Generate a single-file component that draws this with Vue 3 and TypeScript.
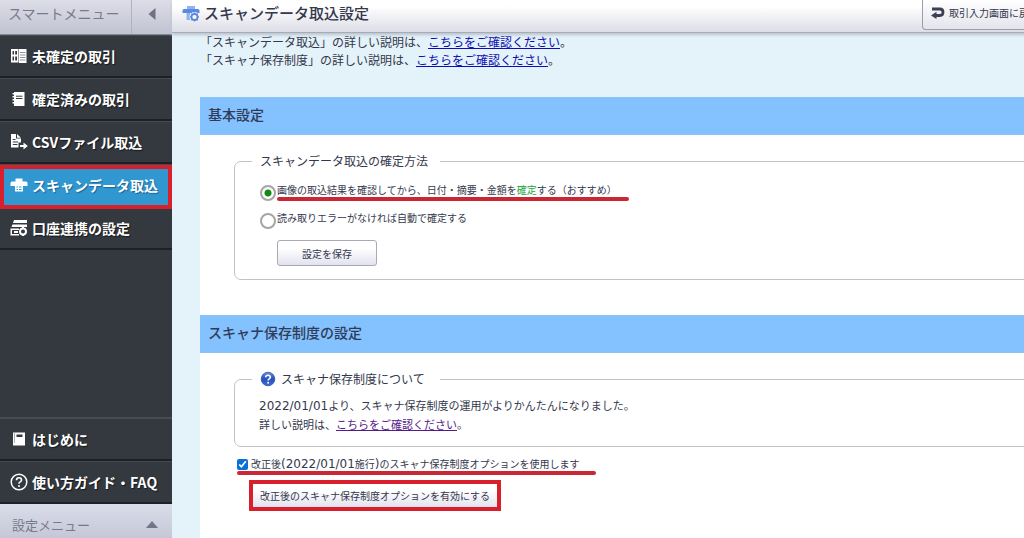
<script setup lang="ts">
import { ref } from 'vue'

type IconName = 'table' | 'book' | 'csv' | 'scanner' | 'account' | 'guide' | 'help'

interface MenuItem {
  label: string
  icon: IconName
  active?: boolean
}

const mainMenu: MenuItem[] = [
  { label: '未確定の取引', icon: 'table' },
  { label: '確定済みの取引', icon: 'book' },
  { label: 'CSVファイル取込', icon: 'csv' },
  { label: 'スキャンデータ取込', icon: 'scanner', active: true },
  { label: '口座連携の設定', icon: 'account' },
]

const helpMenu: MenuItem[] = [
  { label: 'はじめに', icon: 'guide' },
  { label: '使い方ガイド・FAQ', icon: 'help' },
]

const menuGroups = [mainMenu, helpMenu]
const confirmMethod = ref('manual')
const useRevisedOption = ref(true)
</script>

<template>
  <div class="app">
    <aside class="sidebar">
      <div class="menu-head">
        <span class="menu-title">スマートメニュー</span>
        <button class="collapse" type="button" aria-label="メニューを閉じる">
          <svg width="8" height="12" viewBox="0 0 8 12"><path d="M7.500 0V12L0.500 6Z" fill="#6f7080" /></svg>
        </button>
      </div>
      <nav class="menu">
        <ul v-for="(group, index) in menuGroups" :key="index" class="menu-group">
          <li v-for="item in group" :key="item.label">
            <a href="#" class="menu-item" :class="{ active: item.active }">
              <svg class="menu-icon" width="18" height="18" viewBox="0 0 18 18" fill="#fff">
                <template v-if="item.icon === 'table'">
                  <path fill-rule="evenodd" d="M1 2H8.500V15.500H1ZM2.500 4V7.500H4V4ZM5.200 4V7.500H7V4ZM2.500 9.500V13.500H4V9.500ZM5.200 9.500V13.500H7V9.500Z" />
                  <path d="M9 2H16.500V16H9Z" />
                  <path d="M10 5.500H15.500M10 8H15.500M10 10.500H15.500M10 13H15.500" stroke="#8d9296" fill="none" />
                </template>
                <template v-else-if="item.icon === 'book'">
                  <path d="M4 2H14.500V16H4Z" />
                  <path d="M2.500 3H5V4.500H2.500ZM2.500 6H5V7.500H2.500ZM2.500 9H5V10.500H2.500ZM2.500 12H5V13.500H2.500Z" />
                  <path d="M6 6.200H12.500M6 8.500H12.500" stroke="#343a41" fill="none" />
                </template>
                <template v-else-if="item.icon === 'csv'">
                  <path d="M1 1H6V5.500H11V9.500H8.500V14.500H1Z" />
                  <path d="M7 1L11 4.700H7Z" />
                  <path d="M2.800 6.500H5.500M2.800 9H8M2.800 11.500H7.500" stroke="#343a41" fill="none" />
                  <path d="M10 12H13.500V9.500L17.800 13L13.500 16.500V14H10Z" />
                </template>
                <template v-else-if="item.icon === 'scanner'">
                  <path d="M5.500 2.500H12.500V5.500H16Q17.500 5.500 17.500 7V10H13V9H5V10H0.500V7Q0.500 5.500 2 5.500H5.500Z" />
                  <path fill-rule="evenodd" d="M5 9H13V15.500H5ZM6.500 10.500V11.500H8V10.500ZM9 10.500V11.500H11.500V10.500ZM6.500 13V14H8V13ZM9 13V14H11.500V13Z" />
                </template>
                <template v-else-if="item.icon === 'account'">
                  <path d="M4 1H17V4H3ZM2.500 5.500H17V8H1.500ZM1 9.500H9V11H2V15H9V16.500H0.500V9.500Z" />
                  <path d="M4 12H8V14H4Z" />
                  <circle cx="13" cy="12.500" r="3" fill="none" stroke="#fff" stroke-width="2" />
                  <path d="M12 8H14V10H12ZM12 15H14V17H12Z" />
                </template>
                <template v-else-if="item.icon === 'guide'">
                  <path fill-rule="evenodd" d="M3 2.500H15V15.500H3ZM6.500 4.500V7H12.500V4.500Z" />
                  <path d="M4.500 3V13" stroke="#aeb2b6" fill="none" />
                </template>
                <template v-else>
                  <circle cx="9" cy="9" r="7.800" fill="none" stroke="#fff" stroke-width="1.500" />
                  <path d="M6.500 7.200Q6.500 4.800 9 4.800T11.500 7Q11.500 8.200 10.200 8.900Q9 9.500 9 10.700" fill="none" stroke="#fff" stroke-width="1.600" />
                  <circle cx="9" cy="12.900" r="1" />
                </template>
              </svg>
              <span>{{ item.label }}</span>
            </a>
          </li>
        </ul>
      </nav>
      <button class="settings-menu" type="button">
        <span>設定メニュー</span>
        <svg width="12" height="7" viewBox="0 0 12 7"><path d="M0 7L6 0L12 7Z" fill="#74758a" /></svg>
      </button>
    </aside>

    <main class="main">
      <header class="page-head">
        <svg class="page-icon" width="18" height="18" viewBox="0 0 18 18">
          <path d="M5 1H13V4H5Z" fill="#8eb4ee" />
          <path d="M2 4H16Q17.500 4 17.500 6V8H0.500V6Q0.500 4 2 4Z" fill="#5a8ae2" />
          <path d="M4.500 8H8V15H4.500Z" fill="#8eb4ee" />
          <circle cx="12.500" cy="12" r="5" fill="#f4f5f9" />
          <circle cx="12.500" cy="12" r="3" fill="#fff" stroke="#5a8ae2" stroke-width="1.800" />
          <path d="M12.500 7.500V9M12.500 15V16.500M8 12H9.500M15.500 12H17M9.300 8.800L10.300 9.800M14.700 14.200L15.700 15.200M15.700 8.800L14.700 9.800M10.300 14.200L9.300 15.200" stroke="#5a8ae2" stroke-width="1.500" />
        </svg>
        <h1>スキャンデータ取込設定</h1>
        <button class="back" type="button">
          <svg width="14" height="12" viewBox="0 0 14 12">
            <path d="M1 2H9Q12 2 12 5.200T9 8.500H5" fill="none" stroke="#3c3f55" stroke-width="2.800" />
            <path d="M0 8.500L5.500 4.800V12Z" fill="#3c3f55" />
          </svg>
          <span>取引入力画面に戻る</span>
        </button>
      </header>

      <div class="content">
        <div class="intro">
          <p>「スキャンデータ取込」の詳しい説明は、<a href="#">こちらをご確認ください</a>。</p>
          <p>「スキャナ保存制度」の詳しい説明は、<a href="#">こちらをご確認ください</a>。</p>
        </div>

        <section class="panel">
          <h2>基本設定</h2>
          <div class="panel-body">
            <fieldset class="method">
              <legend>スキャンデータ取込の確定方法</legend>
              <label class="choice">
                <input v-model="confirmMethod" type="radio" name="method" value="manual" />
                <span class="marked">画像の取込結果を確認してから、日付・摘要・金額を<em>確定</em>する（おすすめ）</span>
              </label>
              <label class="choice">
                <input v-model="confirmMethod" type="radio" name="method" value="auto" />
                <span>読み取りエラーがなければ自動で確定する</span>
              </label>
              <button class="button save" type="button">設定を保存</button>
            </fieldset>
          </div>
        </section>

        <section class="panel">
          <h2>スキャナ保存制度の設定</h2>
          <div class="panel-body">
            <fieldset class="about">
              <legend>
                <svg width="16" height="16" viewBox="0 0 16 16">
                  <defs>
                    <linearGradient id="help-fill" x1="0" y1="0" x2="0" y2="1">
                      <stop offset="0" stop-color="#6c92e0" />
                      <stop offset="0.500" stop-color="#2450bd" />
                      <stop offset="1" stop-color="#3d6ed6" />
                    </linearGradient>
                  </defs>
                  <circle cx="8" cy="8" r="6.800" fill="url(#help-fill)" stroke="#2c4fa8" stroke-width="0.800" />
                  <path d="M5.700 6.300Q5.800 4.200 8 4.200T10.300 6.200Q10.300 7.200 9.200 7.900Q8.100 8.500 8.100 9.600" fill="none" stroke="#fff" stroke-width="1.600" />
                  <circle cx="8.100" cy="11.700" r="1" fill="#fff" />
                </svg>
                <span>スキャナ保存制度について</span>
              </legend>
              <p><span class="date">2022/01/01</span>より、スキャナ保存制度の運用がよりかんたんになりました。</p>
              <p>詳しい説明は、<a class="visited" href="#">こちらをご確認ください</a>。</p>
            </fieldset>
            <label class="option">
              <input v-model="useRevisedOption" type="checkbox" />
              <span>改正後<span class="date">(2022/01/01</span>施行<span class="date">)</span>のスキャナ保存制度オプションを使用します</span>
            </label>
            <div class="highlight">
              <button class="button enable" type="button">改正後のスキャナ保存制度オプションを有効にする</button>
            </div>
          </div>
        </section>
      </div>
    </main>
  </div>
</template>

<style>
body {
  margin: 0;
  overflow: hidden;
}
</style>

<style scoped>
.app {
  display: flex;
  height: 100vh;
  overflow: hidden;
  color: #34384c;
  background: #fff;
  font-family: "Noto Sans CJK JP", sans-serif;
  font-size: 12px;
  line-height: 18px;
}

.app *,
.app *::after {
  box-sizing: border-box;
}

button {
  font-family: inherit;
  color: inherit;
  cursor: pointer;
}

p,
h1,
h2,
ul {
  margin: 0;
  padding: 0;
}

/* Sidebar */
.sidebar {
  display: flex;
  flex: none;
  flex-direction: column;
  width: 172px;
  background: #343940;
}

.menu-head {
  display: flex;
  flex: none;
  height: 35px;
  color: #797a89;
  background: linear-gradient(#dcdde7, #c2c3d2);
  border-bottom: 1px solid #85868f;
}

.menu-title {
  flex: 1;
  padding-left: 8px;
  font-size: 14px;
  line-height: 26px;
}

.collapse {
  display: flex;
  align-items: center;
  justify-content: center;
  width: 41px;
  padding: 0 0 6px;
  background: none;
  border: 0;
  border-left: 1px solid #b0b1be;
}

.menu {
  display: flex;
  flex: 1;
  flex-direction: column;
  justify-content: space-between;
  min-height: 0;
}

.menu-group {
  list-style: none;
}

.menu-group:last-child {
  border-top: 1px solid #484e56;
}

.menu-item {
  display: flex;
  gap: 4px;
  align-items: center;
  height: 43px;
  padding-left: 10px;
  color: #fff;
  font-size: 14px;
  font-weight: 700;
  text-decoration: none;
  text-shadow: 1px 1px 1px #14181c;
  white-space: nowrap;
  border-top: 1px solid #454b52;
  border-bottom: 2px solid #1d2126;
}

.menu-item.active {
  position: relative;
  background: #3197d0;
  text-shadow: 1px 1px 1px #1c6490;
}

.menu-item.active::after {
  position: absolute;
  inset: 0 0 -4px;
  content: "";
  border: 4px solid #d8202c;
}

.menu-icon {
  flex: none;
}

.settings-menu {
  display: flex;
  flex: none;
  align-items: center;
  justify-content: space-between;
  height: 34px;
  padding: 6px 14px 0 12px;
  color: #797a89;
  font-size: 13px;
  background: linear-gradient(#d9dde9, #c5c7d8);
  border: 0;
}

/* Page */
.main {
  flex: 1;
  min-width: 880px;
  background: #e4f2f9;
}

.page-head {
  position: relative;
  display: flex;
  align-items: flex-start;
  height: 33px;
  padding-left: 10px;
  background: linear-gradient(#fff 20%, #dcdde6);
  border-bottom: 1px solid #a9aab6;
  box-shadow: 0 2px 3px #b9c4ce;
}

.page-icon {
  flex: none;
  margin: 5px 4px 0 0;
}

h1 {
  flex: 1;
  font-size: 15px;
  font-weight: 500;
  line-height: 25px;
}

.back {
  display: flex;
  gap: 4px;
  align-items: center;
  height: 30px;
  padding: 0 12px 4px 8px;
  font-size: 10px;
  background: linear-gradient(#fff, #e3e4ec);
  border: 1px solid #9c9dab;
  border-top: 0;
  border-radius: 0 0 4px 4px;
}

.content {
  padding-left: 28px;
}

.intro {
  padding-bottom: 28px;
}

a {
  color: #0d0db4;
}

a.visited {
  color: #551a8b;
}

h2 {
  padding: 0 0 4px 8px;
  color: #303b58;
  font-size: 14px;
  font-weight: 500;
  line-height: 32px;
  background: #84c1ff;
  border: 1px solid #8dc2f5;
  border-left: 0;
}

.panel-body {
  padding: 17px 14px 35px 34px;
  background: #fff;
}

.panel:last-child .panel-body {
  min-height: 100vh;
}

fieldset {
  min-width: 0;
  margin: 0;
  border: 1px solid #c3c3c6;
  border-radius: 7px;
}

legend {
  display: flex;
  gap: 5px;
  align-items: center;
  margin-left: 17px;
  padding: 0 12px 0 8px;
}

.method {
  padding: 9px 0 13px;
}

.choice {
  display: flex;
  gap: 1px;
  align-items: flex-start;
  width: fit-content;
  height: 28px;
  margin-left: 25px;
  font-size: 10px;
}

.choice input {
  flex: none;
  width: 16px;
  height: 16px;
  margin: 6px 0 0;
  appearance: none;
  background: #fff;
  border: 2px solid #a5a5a5;
  border-radius: 50%;
}

.choice input:checked {
  background: radial-gradient(circle, #128a12 3px, #fff 4px);
}

.choice span {
  padding-top: 2px;
}

.choice em {
  color: #18a53c;
  font-style: normal;
}

.marked,
.option {
  position: relative;
}

.marked::after,
.option::after {
  position: absolute;
  right: -12px;
  bottom: -2px;
  left: 0;
  height: 4px;
  content: "";
  background: #cb2633;
  border-radius: 2px;
}

.option::after {
  right: -16px;
}

.button {
  display: block;
  height: 26px;
  font-size: 10px;
  background: linear-gradient(#fff 30%, #e1e2ee);
  border: 1px solid #aaaab4;
  border-radius: 3px;
}

.save {
  width: 100px;
  margin: 5px 0 0 42px;
}

.about {
  padding: 8px 24px 13px;
  font-size: 11px;
}

.about legend {
  margin-left: -7px;
  padding-right: 15px;
  font-size: 12px;
}

.date {
  font-family: "DejaVu Sans", sans-serif;
  font-size: 12px;
}

.option {
  display: flex;
  gap: 3px;
  align-items: center;
  width: fit-content;
  margin: 8px 0 0 3px;
  font-size: 10px;
}

.option input {
  width: 11px;
  height: 11px;
  margin: 0;
  accent-color: #0b6fd8;
}

.highlight {
  width: fit-content;
  margin: 7px 0 0 15px;
  border: 4px solid #d8202c;
}

.enable {
  height: 23px;
  padding: 0 7px;
  border: 0;
  border-radius: 0;
}
</style>
